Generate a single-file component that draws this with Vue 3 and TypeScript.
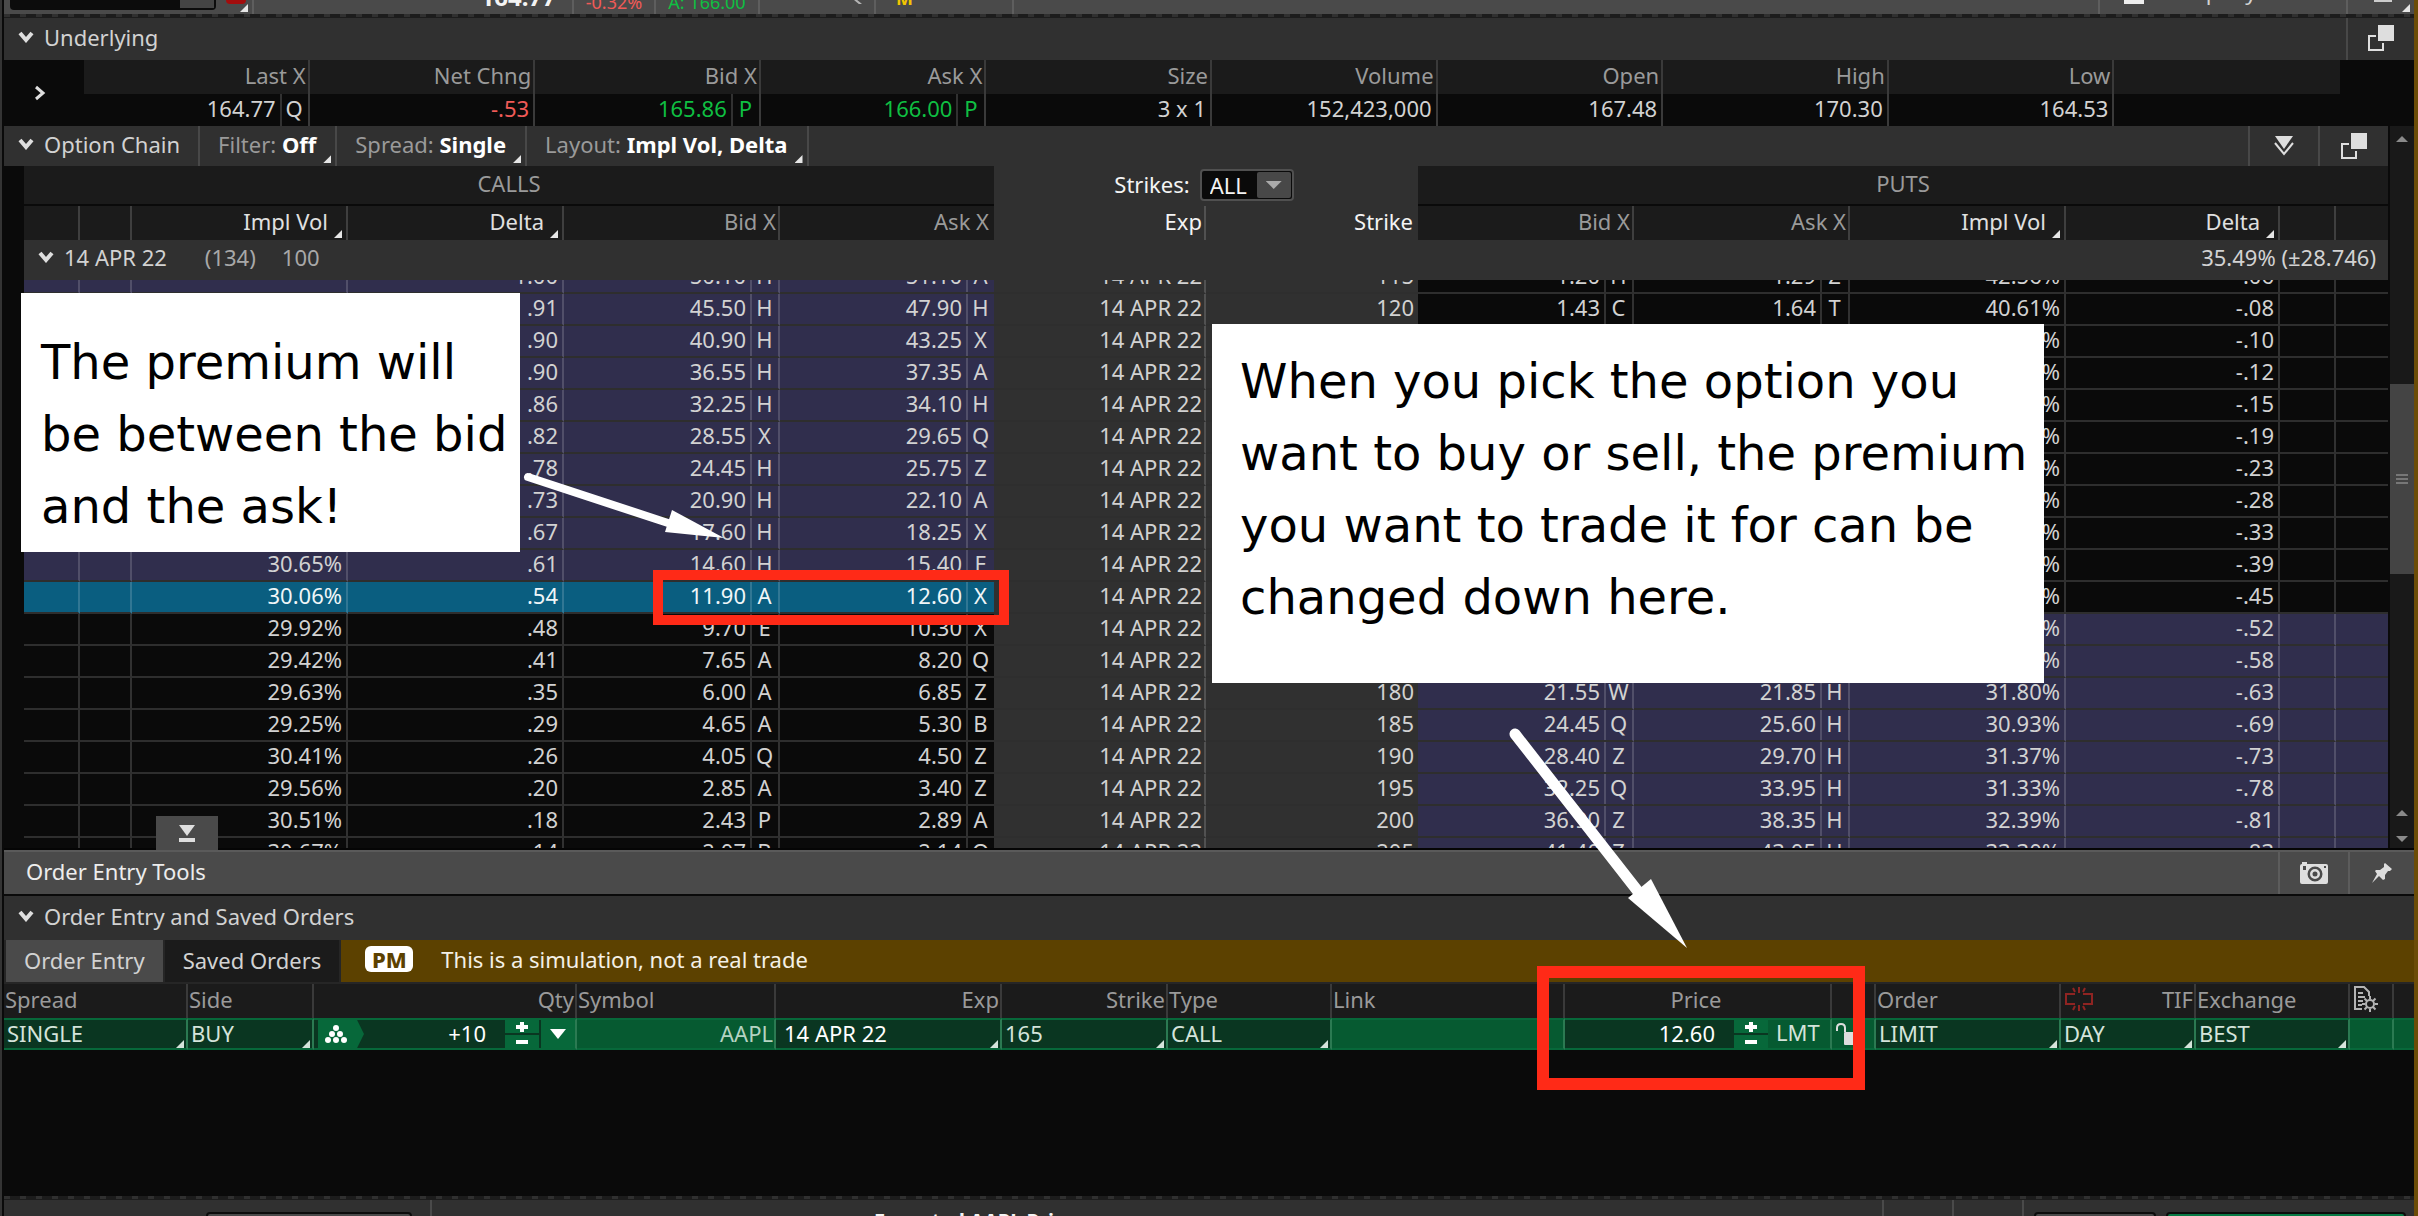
<script setup lang="ts">
import { ref } from 'vue'

type Quote = [price: string, exchange: string]

interface ChainRow {
  strike: number
  callVol: string
  callDelta: string
  callBid: Quote
  callAsk: Quote
  putBid: Quote
  putAsk: Quote
  putVol: string
  putDelta: string
}

interface UnderlyingField {
  label: string
  value: string
  exchange?: string
  tone?: 'up' | 'down'
}

const EXPIRY = '14 APR 22'
const selectedStrike = 165

const underlying: UnderlyingField[] = [
  { label: 'Last X', value: '164.77', exchange: 'Q' },
  { label: 'Net Chng', value: '-.53', tone: 'down' },
  { label: 'Bid X', value: '165.86', exchange: 'P', tone: 'up' },
  { label: 'Ask X', value: '166.00', exchange: 'P', tone: 'up' },
  { label: 'Size', value: '3 x 1' },
  { label: 'Volume', value: '152,423,000' },
  { label: 'Open', value: '167.48' },
  { label: 'High', value: '170.30' },
  { label: 'Low', value: '164.53' },
]

const none: Quote = ['', '']

function row(
  strike: number,
  callVol: string,
  callDelta: string,
  callBid: Quote,
  callAsk: Quote,
  putBid: Quote,
  putAsk: Quote,
  putVol: string,
  putDelta: string,
): ChainRow {
  return { strike, callVol, callDelta, callBid, callAsk, putBid, putAsk, putVol, putDelta }
}

const chain: ChainRow[] = [
  row(115, '', '1.00', ['50.10', 'H'], ['51.10', 'A'], ['1.20', 'H'], ['1.29', 'Z'], '42.56%', '-.06'),
  row(120, '', '.91', ['45.50', 'H'], ['47.90', 'H'], ['1.43', 'C'], ['1.64', 'T'], '40.61%', '-.08'),
  row(125, '', '.90', ['40.90', 'H'], ['43.25', 'X'], none, none, '%', '-.10'),
  row(130, '', '.90', ['36.55', 'H'], ['37.35', 'A'], none, none, '%', '-.12'),
  row(135, '', '.86', ['32.25', 'H'], ['34.10', 'H'], none, none, '%', '-.15'),
  row(140, '', '.82', ['28.55', 'X'], ['29.65', 'Q'], none, none, '%', '-.19'),
  row(145, '', '.78', ['24.45', 'H'], ['25.75', 'Z'], none, none, '%', '-.23'),
  row(150, '', '.73', ['20.90', 'H'], ['22.10', 'A'], none, none, '%', '-.28'),
  row(155, '', '.67', ['17.60', 'H'], ['18.25', 'X'], none, none, '%', '-.33'),
  row(160, '30.65%', '.61', ['14.60', 'H'], ['15.40', 'E'], none, none, '%', '-.39'),
  row(165, '30.06%', '.54', ['11.90', 'A'], ['12.60', 'X'], none, none, '%', '-.45'),
  row(170, '29.92%', '.48', ['9.70', 'E'], ['10.30', 'X'], none, none, '%', '-.52'),
  row(175, '29.42%', '.41', ['7.65', 'A'], ['8.20', 'Q'], none, none, '%', '-.58'),
  row(180, '29.63%', '.35', ['6.00', 'A'], ['6.85', 'Z'], ['21.55', 'W'], ['21.85', 'H'], '31.80%', '-.63'),
  row(185, '29.25%', '.29', ['4.65', 'A'], ['5.30', 'B'], ['24.45', 'Q'], ['25.60', 'H'], '30.93%', '-.69'),
  row(190, '30.41%', '.26', ['4.05', 'Q'], ['4.50', 'Z'], ['28.40', 'Z'], ['29.70', 'H'], '31.37%', '-.73'),
  row(195, '29.56%', '.20', ['2.85', 'A'], ['3.40', 'Z'], ['32.25', 'Q'], ['33.95', 'H'], '31.33%', '-.78'),
  row(200, '30.51%', '.18', ['2.43', 'P'], ['2.89', 'A'], ['36.90', 'Z'], ['38.35', 'H'], '32.39%', '-.81'),
  row(205, '30.67%', '.14', ['2.07', 'B'], ['2.14', 'Q'], ['41.40', 'Z'], ['43.05', 'H'], '33.30%', '-.83'),
]

const columnKinds = [
  'edge', 'thin', 'wide', 'wide', 'wide', 'side',
  'mid', 'mid',
  'wide', 'wide', 'wide', 'side', 'edge', 'thin',
]

function callTone(strike: number): string {
  if (strike === selectedStrike) return 'picked'
  return strike < selectedStrike ? 'itm' : 'otm'
}

function putTone(strike: number): string {
  return strike > selectedStrike ? 'itm' : 'otm'
}

const orderColumns = [
  'o-spread', 'o-side', 'o-qty', 'o-symbol', 'o-exp', 'o-strike', 'o-type', 'o-link',
  'o-price', 'o-lock', 'o-order', 'o-tif', 'o-exch', 'o-gear', 'o-end',
]

const quantity = ref('+10')
const symbol = ref('AAPL')
const price = ref('12.60')
</script>

<template>
  <div class="platform">
    <header class="quote-bar">
      <div class="cell symbol-cell">
        <span class="symbol-box"><i></i></span>
        <span class="red-mark"></span>
        <span class="corner"></span>
      </div>
      <div class="cell last-cell"><b>164.77</b></div>
      <div class="cell pct-cell"><span class="down">-0.32%</span></div>
      <div class="cell ask-cell"><span class="up">A: 166.00</span></div>
      <div class="cell share-cell"><span class="tick"></span></div>
      <div class="cell m-cell"><b>M</b></div>
      <div class="cell gap-cell"></div>
      <div class="cell company-cell"><span class="doc"></span><span class="company">Company Profile</span></div>
      <div class="cell last-tool"><span class="tool-mark"></span><span class="corner"></span></div>
    </header>
    <div class="grip"></div>

    <section class="underlying">
      <div class="bar underlying-bar">
        <button class="toggle" type="button">
          <svg class="chev" viewBox="0 0 16 12"><path d="M2 2 L8 9 L14 2" /></svg>
          <span>Underlying</span>
        </button>
        <button class="tool pop" type="button" aria-label="Detach">
          <svg viewBox="0 0 26 26" class="windows"><path d="M8 11H1V25H15V18" /><rect x="10" y="0" width="16" height="16" /></svg>
        </button>
      </div>
      <div class="under-body">
        <button class="expander" type="button" aria-label="Expand">
          <svg viewBox="0 0 12 16"><path d="M2 2 L9 8 L2 14" /></svg>
        </button>
        <table class="under-table">
          <thead>
            <tr>
              <th v-for="f in underlying" :key="f.label">{{ f.label }}</th>
              <th class="tail"></th>
            </tr>
          </thead>
          <tbody>
            <tr>
              <td v-for="f in underlying" :key="f.label">
                <div class="quote" :class="f.tone">
                  <span class="num">{{ f.value }}</span>
                  <span v-if="f.exchange" class="ex">{{ f.exchange }}</span>
                </div>
              </td>
              <td class="tail"></td>
            </tr>
          </tbody>
        </table>
      </div>
    </section>

    <section class="chain">
      <div class="chain-main">
        <div class="bar chain-bar">
          <button class="toggle chain-toggle" type="button">
            <svg class="chev" viewBox="0 0 16 12"><path d="M2 2 L8 9 L14 2" /></svg>
            <span>Option Chain</span>
          </button>
          <button class="menu filter" type="button">Filter: <b>Off</b><span class="corner"></span></button>
          <button class="menu spread" type="button">Spread: <b>Single</b><span class="corner"></span></button>
          <button class="menu layout" type="button">Layout: <b>Impl Vol, Delta</b><span class="corner"></span></button>
          <span class="spacer"></span>
          <button class="tool" type="button" aria-label="Collapse all">
            <svg viewBox="0 0 22 20" class="double"><path class="fill" d="M2 0H20L11 13Z" /><path class="line" d="M2 7L11 18L20 7" /></svg>
          </button>
          <button class="tool" type="button" aria-label="Detach">
            <svg viewBox="0 0 26 26" class="windows"><path d="M8 11H1V25H15V18" /><rect x="10" y="0" width="16" height="16" /></svg>
          </button>
        </div>

        <div class="chain-body">
          <table class="chain-table chain-head">
            <colgroup><col v-for="(k, i) in columnKinds" :key="i" :class="k" /></colgroup>
            <thead>
              <tr class="sides">
                <th colspan="6">CALLS</th>
                <th colspan="2" class="center">
                  <label class="strikes">Strikes:
                    <span class="combo">
                      <select><option>ALL</option></select>
                      <i></i>
                    </span>
                  </label>
                </th>
                <th colspan="6">PUTS</th>
              </tr>
              <tr class="names">
                <th></th>
                <th></th>
                <th class="menu-col">Impl Vol<span class="corner"></span></th>
                <th class="menu-col">Delta<span class="corner"></span></th>
                <th>Bid X</th>
                <th class="last">Ask X</th>
                <th class="center">Exp</th>
                <th class="center last">Strike</th>
                <th>Bid X</th>
                <th>Ask X</th>
                <th class="menu-col">Impl Vol<span class="corner"></span></th>
                <th class="menu-col">Delta<span class="corner"></span></th>
                <th></th>
                <th class="last"></th>
              </tr>
            </thead>
          </table>
          <div class="expiry">
            <svg class="chev" viewBox="0 0 16 12"><path d="M2 2 L8 9 L14 2" /></svg>
            <span class="expiry-date">{{ EXPIRY }}</span>
            <span class="days">(134)</span>
            <span class="mult">100</span>
            <span class="move">35.49% (±28.746)</span>
          </div>
          <div class="viewport">
            <table class="chain-table quotes">
              <colgroup><col v-for="(k, i) in columnKinds" :key="i" :class="k" /></colgroup>
              <tbody>
                <tr v-for="r in chain" :key="r.strike">
                  <td :class="callTone(r.strike)"></td>
                  <td :class="callTone(r.strike)"></td>
                  <td :class="callTone(r.strike)">{{ r.callVol }}</td>
                  <td :class="callTone(r.strike)">{{ r.callDelta }}</td>
                  <td class="pair" :class="callTone(r.strike)">
                    <div class="quote"><span class="num">{{ r.callBid[0] }}</span><span class="ex">{{ r.callBid[1] }}</span></div>
                  </td>
                  <td class="pair last" :class="callTone(r.strike)">
                    <div class="quote"><span class="num">{{ r.callAsk[0] }}</span><span class="ex">{{ r.callAsk[1] }}</span></div>
                  </td>
                  <td class="center exp">{{ EXPIRY }}</td>
                  <td class="center last">{{ r.strike }}</td>
                  <td class="pair" :class="putTone(r.strike)">
                    <div class="quote"><span class="num">{{ r.putBid[0] }}</span><span class="ex">{{ r.putBid[1] }}</span></div>
                  </td>
                  <td class="pair" :class="putTone(r.strike)">
                    <div class="quote"><span class="num">{{ r.putAsk[0] }}</span><span class="ex">{{ r.putAsk[1] }}</span></div>
                  </td>
                  <td :class="putTone(r.strike)">{{ r.putVol }}</td>
                  <td :class="putTone(r.strike)">{{ r.putDelta }}</td>
                  <td :class="putTone(r.strike)"></td>
                  <td class="last" :class="putTone(r.strike)"></td>
                </tr>
              </tbody>
            </table>
          </div>
        </div>
      </div>
      <div class="scrollbar">
        <span class="arrow up-arrow"></span>
        <span class="track"><span class="thumb"><i></i><i></i><i></i></span></span>
        <span class="arrow up-arrow"></span>
        <span class="arrow down-arrow"></span>
      </div>
      <button class="pull-tab" type="button" aria-label="Hide panel">
        <svg viewBox="0 0 16 18"><path d="M0 0H16L8 11Z" /><rect x="0" y="13" width="16" height="4" /></svg>
      </button>
    </section>

    <section class="orders">
      <div class="tools-bar">
        <span class="tools-title">Order Entry Tools</span>
        <button class="tool" type="button" aria-label="Screenshot">
          <svg viewBox="0 0 28 22" class="camera">
            <path fill-rule="evenodd" d="M2 0H7V2H26Q28 2 28 4V20Q28 22 26 22H2Q0 22 0 20V4Q0 2 2 2Z M15 4.500A7.500 7.500 0 1 0 15 19.500A7.500 7.500 0 1 0 15 4.500Z M3 4V8H6V4Z M24 4V6H26V4Z" />
            <path fill-rule="evenodd" d="M15 7A5 5 0 1 0 15 17A5 5 0 1 0 15 7Z M15 9.500A2.500 2.500 0 1 1 15 14.500A2.500 2.500 0 1 1 15 9.500Z" />
          </svg>
        </button>
        <button class="tool pin-tool" type="button" aria-label="Pin">
          <svg viewBox="0 0 20 20" class="pin"><path d="M13 0L20 6L18 8L16 8L13 12L13 16L11 17L7 13L0 20L5 11L3 8L4 7L8 7L12 4L12 1Z" /></svg>
        </button>
      </div>
      <div class="bar orders-bar">
        <button class="toggle" type="button">
          <svg class="chev" viewBox="0 0 16 12"><path d="M2 2 L8 9 L14 2" /></svg>
          <span>Order Entry and Saved Orders</span>
        </button>
      </div>
      <div class="tabs">
        <button class="tab active" type="button">Order Entry</button>
        <button class="tab" type="button">Saved Orders</button>
        <p class="banner"><span class="pm">PM</span>This is a simulation, not a real trade</p>
      </div>

      <table class="order-table">
        <colgroup><col v-for="c in orderColumns" :key="c" :class="c" /></colgroup>
        <thead>
          <tr>
            <th>Spread</th>
            <th>Side</th>
            <th class="right">Qty</th>
            <th>Symbol</th>
            <th class="right">Exp</th>
            <th class="right">Strike</th>
            <th>Type</th>
            <th>Link</th>
            <th class="middle">Price</th>
            <th></th>
            <th>Order</th>
            <th>
              <div class="tif">
                <svg viewBox="0 0 30 24" class="broken"><path d="M11 7H2V17H11M19 7H28V17H19M15 0V6M15 18V24M9 1L11 5M21 1L19 5M9 23L11 19M21 23L19 19" /></svg>
                <span>TIF</span>
              </div>
            </th>
            <th>Exchange</th>
            <th class="gear-cell">
              <svg viewBox="0 0 26 26" class="gear">
                <path class="line" d="M9 23H2V1H11L16 6V10M5 7H10M5 11H12M5 15H10M5 19H9" />
                <circle class="line" cx="17" cy="18" r="4" />
                <path class="line" d="M17 10V13M17 23V26M9 18H12M22 18H25M11.500 12.500L14 15M20 21L22.500 23.500M22.500 12.500L20 15M14 21L11.500 23.500" />
              </svg>
            </th>
            <th></th>
          </tr>
        </thead>
        <tbody>
          <tr>
            <td><span class="pick"><select aria-label="Spread"><option>SINGLE</option></select></span></td>
            <td><span class="pick"><select aria-label="Side"><option>BUY</option></select></span></td>
            <td>
              <div class="qty">
                <span class="flag">
                  <svg viewBox="0 0 22 18"><circle cx="11" cy="3" r="3" /><circle cx="7" cy="9" r="3" /><circle cx="15" cy="9" r="3" /><circle cx="3" cy="15" r="3" /><circle cx="11" cy="15" r="3" /><circle cx="19" cy="15" r="3" /></svg>
                </span>
                <input v-model="quantity" aria-label="Quantity" />
                <span class="steps">
                  <button type="button" aria-label="More"><svg viewBox="0 0 12 10"><path d="M4 0H8V3H12V7H8V10H4V7H0V3H4Z" /></svg></button>
                  <button type="button" aria-label="Fewer"><svg viewBox="0 0 12 4"><path d="M0 0H12V4H0Z" /></svg></button>
                </span>
                <button class="more" type="button" aria-label="Quantities"><svg viewBox="0 0 16 10"><path d="M0 0H16L8 10Z" /></svg></button>
              </div>
            </td>
            <td class="plain"><input v-model="symbol" class="symbol" aria-label="Symbol" /></td>
            <td><span class="pick bright"><select aria-label="Expiration"><option>14 APR 22</option></select></span></td>
            <td><span class="pick"><select aria-label="Strike"><option>165</option></select></span></td>
            <td><span class="pick"><select aria-label="Type"><option>CALL</option></select></span></td>
            <td class="plain"></td>
            <td>
              <div class="qty">
                <input v-model="price" aria-label="Price" />
                <span class="steps">
                  <button type="button" aria-label="Raise"><svg viewBox="0 0 12 10"><path d="M4 0H8V3H12V7H8V10H4V7H0V3H4Z" /></svg></button>
                  <button type="button" aria-label="Lower"><svg viewBox="0 0 12 4"><path d="M0 0H12V4H0Z" /></svg></button>
                </span>
                <span class="lmt">LMT</span>
              </div>
            </td>
            <td class="plain lock-cell">
              <svg viewBox="0 0 26 22" class="lock"><path class="line" d="M1 8V5Q1 1 5 1Q9 1 9 5V9" /><rect x="8" y="9" width="18" height="13" rx="1" /></svg>
            </td>
            <td><span class="pick"><select aria-label="Order"><option>LIMIT</option></select></span></td>
            <td><span class="pick"><select aria-label="Time in force"><option>DAY</option></select></span></td>
            <td><span class="pick"><select aria-label="Exchange"><option>BEST</option></select></span></td>
            <td class="plain"></td>
            <td class="plain last"></td>
          </tr>
        </tbody>
      </table>
      <div class="order-space"></div>
    </section>

    <div class="grip"></div>
    <footer class="confirm">
      <div class="confirm-left"><span class="stub"></span></div>
      <div class="confirm-main"><b>Expected AAPL Price</b></div>
      <div class="confirm-cell"></div>
      <div class="confirm-cell"></div>
      <div class="confirm-end"><span class="stub grey"></span><span class="stub green"></span></div>
    </footer>

    <aside class="notes">
      <p class="note note-a">The premium will<br />be between the bid<br />and the ask!</p>
      <p class="note note-b">When you pick the option you<br />want to buy or sell, the premium<br />you want to trade it for can be<br />changed down here.</p>
      <span class="frame frame-a"></span>
      <span class="frame frame-b"></span>
      <svg class="arrow-a" viewBox="0 0 204 70"><path class="shaft" d="M6 5L146 51" /><path d="M150 38L202 66L143 60Z" /></svg>
      <svg class="arrow-b" viewBox="0 0 184 226"><path class="shaft thick" d="M8 8L133 168" /><path d="M144 153L180 222L121 172Z" /></svg>
    </aside>
  </div>
</template>

<style>
body {
  margin: 0;
  background: #0a0a0a;
}
</style>

<style scoped>
* {
  box-sizing: border-box;
}

.platform {
  position: relative;
  display: flex;
  flex-direction: column;
  min-height: 100vh;
  overflow: hidden;
  padding-left: 2px;
  border-left: 2px solid #343434;
  border-right: 4px solid #6b4c07;
  background: #0a0a0a;
  color: #d2d2d2;
  font-family: 'Noto Sans', 'Open Sans', sans-serif;
  font-size: 22px;
  line-height: 30px;
}

button,
input,
select {
  margin: 0;
  padding: 0;
  border: 0;
  border-radius: 0;
  background: none;
  color: inherit;
  font: inherit;
  appearance: none;
  outline: none;
}

svg {
  display: block;
  flex: none;
  fill: #dedede;
}

table {
  width: 100%;
  table-layout: fixed;
  border-collapse: separate;
  border-spacing: 0;
}

th,
td {
  padding: 0;
  font-weight: 400;
  white-space: nowrap;
}

.up {
  color: #0fbf42;
}

.down {
  color: #f05a57;
}

.corner {
  position: absolute;
  right: 4px;
  bottom: 3px;
  width: 8px;
  height: 8px;
  background: #e6e6e6;
  clip-path: polygon(100% 0, 100% 100%, 0 100%);
}

.chev {
  width: 16px;
  height: 12px;
  fill: none;
  stroke: #dedede;
  stroke-width: 4;
}

/* quote bar */
.quote-bar {
  display: flex;
  height: 14px;
  overflow: hidden;
  background: #4a4a4a;
}

.cell {
  position: relative;
  display: flex;
  flex: none;
  align-items: flex-end;
  border-right: 2px solid #5e5e5e;
}

.cell b,
.cell span {
  flex: none;
}

.symbol-cell {
  width: 250px;
  padding-left: 6px;
}

.symbol-box {
  display: flex;
  justify-content: flex-end;
  width: 206px;
  height: 10px;
  margin-bottom: 4px;
  padding: 0 2px 2px;
  border-radius: 0 0 4px 4px;
  background: #0c0c0c;
}

.symbol-box i {
  width: 34px;
  background: #444;
}

.red-mark {
  width: 20px;
  height: 4px;
  margin: 0 0 10px 10px;
  border-radius: 0 0 4px 4px;
  background: #a30d0d;
}

.quote-bar .corner {
  bottom: 2px;
}

.last-cell {
  justify-content: flex-end;
  width: 320px;
  padding-right: 16px;
  color: #f4f4f4;
  font-size: 24px;
  line-height: 22px;
}

.last-cell b {
  margin-bottom: 6px;
}

.pct-cell {
  justify-content: center;
  width: 82px;
}

.ask-cell {
  justify-content: center;
  width: 104px;
}

.pct-cell,
.ask-cell {
  font-size: 18px;
  line-height: 22px;
}

.pct-cell span,
.ask-cell span {
  margin-bottom: 1px;
}

.share-cell {
  width: 116px;
  padding-left: 94px;
}

.tick {
  width: 8px;
  height: 4px;
  margin-bottom: 10px;
  background: #b4b4b4;
  clip-path: polygon(0 0, 40% 0, 100% 100%, 60% 100%);
}

.m-cell {
  width: 138px;
  padding-left: 20px;
  color: #f2c500;
  font-size: 18px;
  line-height: 22px;
}

.m-cell b {
  margin-bottom: 5px;
}

.gap-cell {
  flex: 1;
}

.company-cell {
  width: 248px;
  padding-left: 24px;
  gap: 14px;
}

.doc {
  width: 20px;
  height: 4px;
  margin-bottom: 10px;
  background: #eee;
}

.company {
  margin-bottom: 8px;
}

.last-tool {
  width: 66px;
  padding-left: 26px;
  border-right: 0;
}

.tool-mark {
  width: 18px;
  height: 2px;
  margin-bottom: 12px;
  background: #ccc;
}

.grip {
  flex: none;
  height: 4px;
  background: repeating-linear-gradient(90deg, #303030 0 6px, #1c1c1c 6px 16px);
  border-bottom: 1px solid #1c1c1c;
}

/* section bars */
.bar {
  display: flex;
  background: #303030;
}

.toggle {
  display: flex;
  align-items: center;
  gap: 10px;
  padding: 0 18px 5px 14px;
}

.tool {
  display: flex;
  align-items: center;
  justify-content: center;
  width: 70px;
  border-left: 2px solid #484848;
}

.windows {
  width: 26px;
  height: 26px;
}

.windows path {
  fill: none;
  stroke: #dedede;
  stroke-width: 2;
}

.underlying-bar {
  justify-content: space-between;
  height: 42px;
}

.pop {
  width: 68px;
  padding-bottom: 2px;
}

.under-body {
  display: flex;
  padding-right: 74px;
}

.expander {
  display: flex;
  flex: none;
  align-items: center;
  width: 80px;
  padding-left: 30px;
}

.expander svg {
  width: 12px;
  height: 16px;
  fill: none;
  stroke: #dedede;
  stroke-width: 3;
}

.under-table th,
.under-table td {
  border-right: 2px solid #3a3a3a;
  text-align: right;
}

.under-table th {
  height: 34px;
  padding: 0 2px 4px 0;
  background: #1b1b1b;
  color: #9a9a9a;
}

.under-table th.tail {
  border-right: 0;
}

.under-table td {
  height: 32px;
}

.under-table td.tail {
  border-right: 0;
}

.quote {
  display: flex;
  line-height: 26px;
  padding-bottom: 4px;
}

.under-table .quote {
  line-height: 28px;
}

.num {
  flex: 1;
  padding-right: 4px;
  text-align: right;
}

.ex {
  width: 28px;
  margin-bottom: -4px;
  padding-right: 1px;
  border-left: 2px solid rgba(255, 255, 255, 0.16);
  text-align: center;
}

/* option chain */
.chain {
  position: relative;
  display: flex;
  border-bottom: 2px solid #050505;
}

.chain-main {
  flex: 1;
  min-width: 0;
}

.chain-bar {
  height: 40px;
}

.menu {
  position: relative;
  padding: 0 19px 5px 18px;
  border-left: 2px solid #484848;
  color: #9a9a9a;
  white-space: nowrap;
}

.menu b {
  color: #fff;
}

.menu.layout {
  border-right: 2px solid #484848;
}

.spacer {
  flex: 1;
}

.double {
  width: 22px;
  height: 20px;
}

.double .line {
  fill: none;
  stroke: #dedede;
  stroke-width: 2;
}

.chain-body {
  margin-left: 20px;
}

.edge {
  width: 56px;
}

.thin {
  width: 52px;
}

.wide {
  width: 216px;
}

.side {
  width: 214px;
}

.mid {
  width: 212px;
}

.chain-table th,
.chain-table td {
  border-right: 2px solid rgba(255, 255, 255, 0.16);
}

.chain-table .last {
  border-right: 0;
}

.chain-head th {
  background: #1b1b1b;
  color: #9a9a9a;
}

.chain-head th.center {
  background: #303030;
  color: #f4f4f4;
}

.sides th {
  height: 40px;
  padding-bottom: 4px;
  border-bottom: 2px solid #0a0a0a;
  line-height: 34px;
}

.chain-table .sides th {
  border-right: 0;
}

.sides th.center {
  padding: 0 0 4px;
  border-bottom: 0;
}

.strikes {
  display: flex;
  align-items: center;
  justify-content: center;
  gap: 10px;
  padding-right: 4px;
}

.combo {
  position: relative;
  display: block;
  width: 94px;
  height: 32px;
  margin-top: 2px;
  border: 2px solid #505050;
  border-radius: 4px;
  background: #0a0a0a;
}

.combo select {
  display: block;
  width: 100%;
  height: 28px;
  padding: 0 0 1px 8px;
  line-height: 26px;
}

.combo i {
  position: absolute;
  top: 1px;
  right: 1px;
  width: 34px;
  height: 26px;
  border-radius: 2px;
  background: #484848;
  pointer-events: none;
}

.combo i::after {
  content: '';
  display: block;
  width: 16px;
  height: 8px;
  margin: 9px auto;
  background: #aaa;
  clip-path: polygon(0 0, 100% 0, 50% 100%);
}

.names th {
  position: relative;
  height: 34px;
  padding: 0 2px 4px 0;
  text-align: right;
}

.names th.last {
  padding-right: 5px;
}

.names th.menu-col {
  padding-right: 18px;
  color: #e0e0e0;
}

.names .corner {
  bottom: 2px;
}

.expiry {
  display: flex;
  align-items: center;
  height: 40px;
  padding: 0 12px 6px 14px;
  background: #303030;
}

.expiry-date {
  margin: 0 38px 0 10px;
}

.days,
.mult {
  color: #a8a8a8;
}

.mult {
  margin-left: 26px;
}

.move {
  margin-left: auto;
}

.viewport {
  height: 568px;
  overflow: hidden;
}

.quotes {
  margin-top: -18px;
}

.quotes td {
  height: 32px;
  padding: 0 4px 4px 0;
  border-bottom: 2px solid #2e2e2e;
  line-height: 26px;
  text-align: right;
}

.quotes td.pair {
  padding: 0;
}

.quotes td.itm {
  background: #302e4d;
}

.quotes td.otm {
  background: #0a0a0a;
}

.quotes td.picked {
  background: #0a5e80;
  color: #f0f6f8;
}

.quotes td.center {
  background: #303030;
}

.quotes td.exp {
  padding-right: 2px;
}

.scrollbar {
  display: flex;
  flex: none;
  flex-direction: column;
  align-items: center;
  width: 26px;
  padding: 10px 0 4px;
  border-left: 2px solid #0a0a0a;
  background: #191919;
}

.arrow {
  width: 12px;
  height: 6px;
  background: #8a8a8a;
}

.up-arrow {
  clip-path: polygon(50% 0, 100% 100%, 0 100%);
}

.down-arrow {
  margin: 20px 0 2px;
  clip-path: polygon(0 0, 100% 0, 50% 100%);
}

.track {
  flex: 1;
  align-self: stretch;
  padding-top: 242px;
}

.thumb {
  display: flex;
  flex-direction: column;
  align-items: center;
  justify-content: center;
  gap: 2px;
  height: 190px;
  background: #444;
}

.thumb i {
  width: 12px;
  height: 2px;
  background: #777;
}

.pull-tab {
  position: absolute;
  bottom: -2px;
  left: 152px;
  display: flex;
  justify-content: center;
  width: 62px;
  height: 34px;
  padding-top: 9px;
  background: #4a4a4a;
}

.pull-tab svg {
  width: 16px;
  height: 18px;
}

/* order entry */
.orders {
  display: flex;
  flex: 1;
  flex-direction: column;
}

.tools-bar {
  display: flex;
  height: 46px;
  border-top: 2px solid #5a5a5a;
  border-bottom: 2px solid #0a0a0a;
  background: #4a4a4a;
  color: #ededed;
}

.tools-title {
  flex: 1;
  padding: 4px 0 0 22px;
}

.tools-bar .tool {
  border-color: #5c5c5c;
}

.camera {
  width: 28px;
  height: 22px;
}

.pin {
  width: 20px;
  height: 20px;
}

.tools-bar .pin-tool {
  width: 66px;
}

.orders-bar {
  height: 44px;
}

.tabs {
  display: flex;
  gap: 2px;
  height: 44px;
  padding: 0 0 2px 2px;
  background: #262626;
}

.tab {
  padding: 0 18px 3px;
  background: #1b1b1b;
}

.tab.active {
  background: #4a4a4a;
}

.banner {
  display: flex;
  flex: 1;
  align-items: center;
  margin: 0;
  padding: 0 0 4px 24px;
  background: #5c4100;
  color: #f4f0e6;
}

.pm {
  width: 48px;
  height: 26px;
  margin-right: 28px;
  border-radius: 6px;
  background: #fff;
  color: #5c4100;
  font-weight: 800;
  line-height: 26px;
  text-align: center;
}

.o-spread { width: 184px; }
.o-side { width: 126px; }
.o-qty { width: 263px; }
.o-symbol { width: 199px; }
.o-exp { width: 226px; }
.o-strike { width: 166px; }
.o-type { width: 164px; }
.o-link { width: 233px; }
.o-price { width: 267px; }
.o-lock { width: 44px; }
.o-order { width: 185px; }
.o-tif { width: 135px; }
.o-exch { width: 154px; }
.o-gear { width: 44px; }
.o-end { width: 20px; }

.order-table th {
  height: 34px;
  padding: 0 1px 4px 1px;
  border-right: 2px solid #3a3a3a;
  background: #1b1b1b;
  color: #9a9a9a;
  text-align: left;
}

.order-table th:last-child {
  border-right: 0;
}

.order-table th.right {
  padding-right: 1px;
  text-align: right;
}

.order-table th.middle {
  padding-right: 4px;
  text-align: center;
}

.tif {
  display: flex;
  align-items: center;
  justify-content: space-between;
  padding-left: 2px;
}

.broken {
  width: 30px;
  height: 24px;
  fill: none;
  stroke: #8f2422;
  stroke-width: 2;
}

.gear {
  width: 26px;
  height: 26px;
  margin-left: 2px;
}

.gear .line,
.lock .line {
  fill: none;
  stroke: #b4b4b4;
  stroke-width: 2;
}

.order-table td {
  height: 32px;
  border-top: 2px solid #07683a;
  border-right: 2px solid #2b7a52;
  border-bottom: 2px solid #07683a;
  background: #0a3621;
  color: #d5e4db;
}

.order-table td.plain {
  background: #065a31;
}

.order-table td.last {
  border-right: 0;
}

.pick {
  position: relative;
  display: block;
}

.pick::after {
  content: '';
  position: absolute;
  right: 2px;
  bottom: 0;
  width: 8px;
  height: 8px;
  background: #d5e4db;
  clip-path: polygon(100% 0, 100% 100%, 0 100%);
  pointer-events: none;
}

.pick select {
  display: block;
  width: 100%;
  height: 28px;
  padding: 0 0 3px 3px;
  line-height: 24px;
}

.bright select {
  padding-left: 8px;
  color: #fff;
}

.qty {
  display: flex;
  height: 28px;
  gap: 2px;
}

.qty input {
  flex: 1;
  min-width: 0;
  padding: 0 17px 3px 0;
  color: #fff;
  text-align: right;
}

.flag {
  display: flex;
  align-items: center;
  width: 46px;
  margin-left: 4px;
  padding-left: 7px;
  background: #07683a;
  clip-path: polygon(0 0, 85% 0, 100% 50%, 85% 100%, 0 100%);
}

.flag svg {
  width: 22px;
  height: 18px;
  fill: #fff;
}

.steps {
  display: flex;
  flex-direction: column;
  gap: 2px;
  width: 34px;
}

.steps button {
  display: flex;
  flex: 1;
  align-items: center;
  justify-content: center;
  background: #07683a;
}

.steps svg {
  width: 12px;
  fill: #fff;
}

.more {
  display: flex;
  align-items: center;
  justify-content: center;
  width: 34px;
  background: #07683a;
}

.more svg {
  width: 16px;
  height: 10px;
  fill: #fff;
}

.symbol {
  display: block;
  width: 100%;
  height: 28px;
  padding: 0 1px 3px 0;
  color: #b5d3c2;
  text-align: right;
}

.lmt {
  width: 62px;
  margin-left: -2px;
  padding-left: 8px;
  background: #065a31;
  line-height: 25px;
}

.lock {
  width: 26px;
  height: 22px;
  margin-left: 4px;
}

.lock .line {
  stroke: #dedede;
}

.order-space {
  flex: 1;
  min-height: 60px;
}

/* confirmation strip */
.confirm {
  display: flex;
  flex: none;
  height: 16px;
  overflow: hidden;
  background: #303030;
}

.confirm-left {
  width: 428px;
  padding: 12px 18px 0 202px;
  border-right: 2px solid #4a4a4a;
}

.stub {
  display: block;
  flex: 1;
  height: 8px;
  border: 2px solid #0c0c0c;
  border-radius: 4px 4px 0 0;
  background: #4a4a4a;
}

.confirm-main {
  flex: 1;
  padding: 6px 0 0 442px;
  border-right: 2px solid #4a4a4a;
  color: #f4f4f4;
  font-size: 20px;
}

.confirm-cell {
  width: 70px;
  border-right: 2px solid #4a4a4a;
}

.confirm-end {
  display: flex;
  gap: 10px;
  width: 390px;
  padding: 12px 8px 0 10px;
}

.stub.green {
  flex: 2;
  background: #087a45;
}

/* annotations drawn over the platform */
.notes {
  position: absolute;
  top: 0;
  left: 0;
}

.note {
  position: absolute;
  margin: 0;
  background: #fff;
  color: #000;
  font-family: 'DejaVu Sans', Verdana, sans-serif;
  font-size: 48px;
  line-height: 72px;
  white-space: nowrap;
}

.note::after {
  content: '';
  position: absolute;
  z-index: -1;
  background: #fff;
}

.note-a {
  top: 293px;
  left: 19px;
  width: 499px;
  height: 259px;
  padding: 33px 0 0 20px;
}

.note-a::after {
  top: 147px;
  right: -2px;
  bottom: 0;
  left: -3px;
}

.note-b {
  top: 324px;
  left: 1210px;
  width: 832px;
  height: 359px;
  padding: 21px 0 0 28px;
}

.note-b::after {
  top: 161px;
  right: 0;
  bottom: 0;
  left: -2px;
}

.frame {
  position: absolute;
  border: 10px solid #ff2a17;
}

.frame-a {
  top: 570px;
  left: 651px;
  width: 356px;
  height: 55px;
}

.frame-b {
  top: 966px;
  left: 1535px;
  width: 328px;
  height: 124px;
  border-width: 12px;
}

.arrow-a,
.arrow-b {
  position: absolute;
  fill: #fff;
}

.shaft {
  fill: none;
  stroke: #fff;
  stroke-width: 8;
  stroke-linecap: round;
}

.thick {
  stroke-width: 11;
}

.arrow-a {
  top: 472px;
  left: 520px;
  width: 204px;
  height: 70px;
}

.arrow-b {
  top: 726px;
  left: 1505px;
  width: 184px;
  height: 226px;
}
</style>
